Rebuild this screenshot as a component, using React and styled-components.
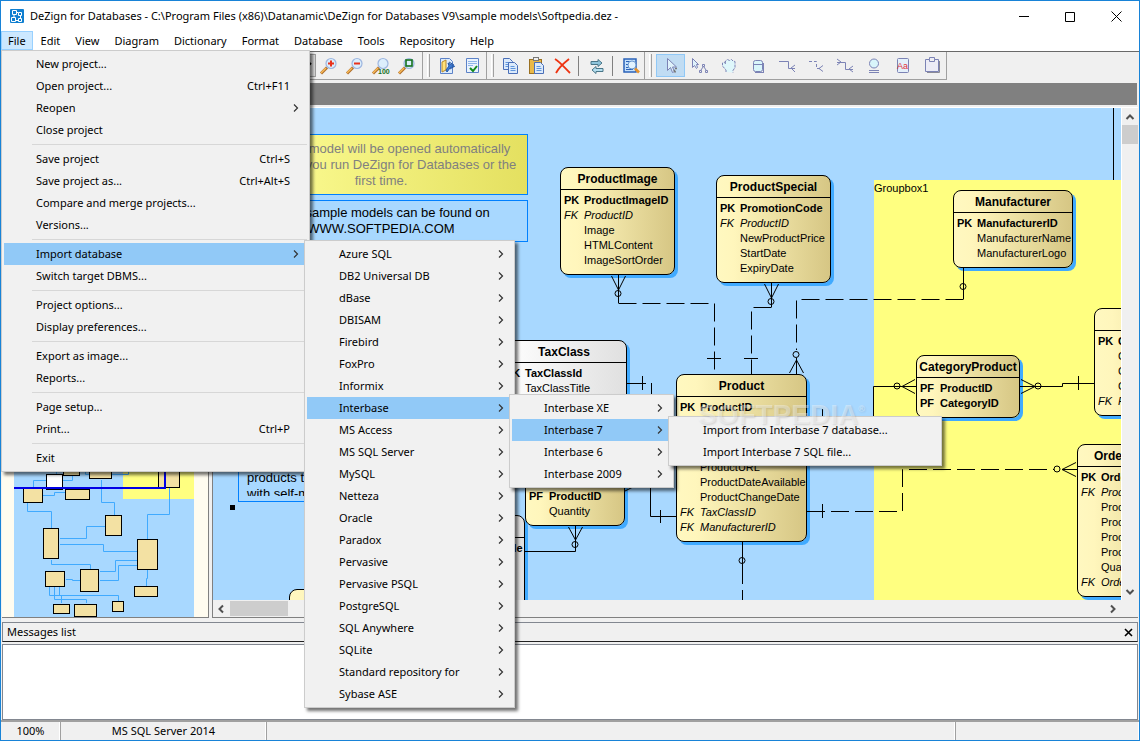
import styled, { createGlobalStyle, css } from "styled-components";

const MENU_BAR = [
  "File",
  "Edit",
  "View",
  "Diagram",
  "Dictionary",
  "Format",
  "Database",
  "Tools",
  "Repository",
  "Help",
];

const interbase7Menu = [
  { label: "Import from Interbase 7 database..." },
  { label: "Import Interbase 7 SQL file..." },
];

const interbaseMenu = [
  { label: "Interbase XE", more: true },
  { label: "Interbase 7", more: true, items: interbase7Menu, width: 274 },
  { label: "Interbase 6", more: true },
  { label: "Interbase 2009", more: true },
];

const importMenu = [
  "Azure SQL",
  "DB2 Universal DB",
  "dBase",
  "DBISAM",
  "Firebird",
  "FoxPro",
  "Informix",
  "Interbase",
  "MS Access",
  "MS SQL Server",
  "MySQL",
  "Netteza",
  "Oracle",
  "Paradox",
  "Pervasive",
  "Pervasive PSQL",
  "PostgreSQL",
  "SQL Anywhere",
  "SQLite",
  "Standard repository for",
  "Sybase ASE",
].map((label) => ({
  label,
  more: true,
  ...(label === "Interbase" ? { items: interbaseMenu, width: 165 } : {}),
}));

const fileMenu = [
  { label: "New project..." },
  { label: "Open project...", keys: "Ctrl+F11" },
  { label: "Reopen", more: true },
  { label: "Close project" },
  null,
  { label: "Save project", keys: "Ctrl+S" },
  { label: "Save project as...", keys: "Ctrl+Alt+S" },
  { label: "Compare and merge projects..." },
  { label: "Versions..." },
  null,
  { label: "Import database", more: true, items: importMenu, width: 211 },
  { label: "Switch target DBMS..." },
  null,
  { label: "Project options..." },
  { label: "Display preferences..." },
  null,
  { label: "Export as image..." },
  { label: "Reports..." },
  null,
  { label: "Page setup..." },
  { label: "Print...", keys: "Ctrl+P" },
  null,
  { label: "Exit" },
];

// part of the diagram that is scrolled into view
const VIEW = { x: 213, y: 108 };

const ENTITIES = [
  {
    name: "ProductImage", x: 560, y: 167, w: 115,
    rows: [["PK", "ProductImageID"], ["FK", "ProductID"], ["", "Image"], ["", "HTMLContent"], ["", "ImageSortOrder"]],
  },
  {
    name: "ProductSpecial", x: 716, y: 175, w: 115,
    rows: [["PK", "PromotionCode"], ["FK", "ProductID"], ["", "NewProductPrice"], ["", "StartDate"], ["", "ExpiryDate"]],
  },
  {
    name: "Manufacturer", x: 953, y: 190, w: 120,
    rows: [["PK", "ManufacturerID"], ["", "ManufacturerName"], ["", "ManufacturerLogo"]],
  },
  {
    name: "TaxClass", x: 501, y: 340, w: 126, plain: true,
    rows: [["PK", "TaxClassId"], ["", "TaxClassTitle"], ["", "Description"]],
  },
  {
    name: "Shipping", x: 424, y: 515, w: 101, plain: true,
    rows: [["PK", "ShippingCode"], ["", "Title"], ["", "Price"], ["", "Region"]],
  },
  {
    name: "CartItem", x: 525, y: 448, w: 100,
    rows: [["PF", "CartID"], ["PF", "ProductID"], ["", "Quantity"]],
  },
  {
    name: "Product", x: 676, y: 374, w: 131,
    rows: [
      ["PK", "ProductID"], ["", "ProductName"], ["", "Description"], ["", "Price"], ["", "ProductURL"],
      ["", "ProductDateAvailable"], ["", "ProductChangeDate"], ["FK", "TaxClassID"], ["FK", "ManufacturerID"],
    ],
  },
  {
    name: "CategoryProduct", x: 916, y: 355, w: 104,
    rows: [["PF", "ProductID"], ["PF", "CategoryID"]],
  },
  {
    name: "Category", x: 1094, y: 308, w: 120,
    rows: [["PK", "CategoryID"], ["", "CategoryName"], ["", "CategoryText"], ["", "CategoryLogo"], ["FK", "ParentID"]],
  },
  {
    name: "OrderProduct", x: 1077, y: 444, w: 112,
    rows: [
      ["PK", "OrderProductID"], ["FK", "ProductID"], ["", "ProductName"], ["", "ProductModel"],
      ["", "ProductPrice"], ["", "ProductTax"], ["", "Quantity"], ["FK", "OrderID"],
    ],
  },
  { name: "Customer", x: 289, y: 589, w: 110, rows: [["PK", "CustomerID"]] },
];

const IconText = styled.text`
  fill: ${({ $green }) => ($green ? "#14711c" : "#e0303c")};
  font-family: "Liberation Sans", Arial, sans-serif;
  font-size: ${({ $green }) => ($green ? 7 : 9)}px;
  font-weight: ${({ $green }) => ($green ? 700 : 400)};
`;

const Icon = ({ children }) => (
  <svg width="20" height="20" viewBox="0 0 20 20" fill="none" aria-hidden="true">
    {children}
  </svg>
);

const Magnifier = ({ children }) => (
  <Icon>
    <path d="M2 17.500l6-6" stroke="#b0702c" strokeWidth="3" />
    <path d="M2 17l5-5" stroke="#f9bb58" strokeWidth="1.500" />
    <circle cx="12" cy="7.500" r="5" fill="#dceefc" stroke="#9db6e0" strokeWidth="1.200" />
    {children}
  </Icon>
);

const PageShape = ({ x, y }) => (
  <g>
    <path d={`M${x} ${y}h6l3 3v8h-9z`} fill="#dbeafb" stroke="#4a6fb8" />
    <path d={`M${x + 2} ${y + 4}h4M${x + 2} ${y + 6}h5M${x + 2} ${y + 8}h5`} stroke="#5f95dc" />
  </g>
);

const ICONS = {
  zoomIn: (
    <Magnifier>
      <path d="M12 4.500v6M9 7.500h6" stroke="#e8321c" strokeWidth="2" />
    </Magnifier>
  ),
  zoomOut: (
    <Magnifier>
      <path d="M9 7.500h6" stroke="#e8321c" strokeWidth="2" />
    </Magnifier>
  ),
  zoom100: (
    <Magnifier>
      <IconText x="7" y="18" $green>100</IconText>
    </Magnifier>
  ),
  zoomFit: (
    <Magnifier>
      <rect x="9" y="4" width="6" height="6" stroke="#14711c" strokeWidth="1.600" />
    </Magnifier>
  ),
  generate: (
    <Icon>
      <path d="M3.500 2.500h9l3 3v12h-12z" fill="#dcebfb" stroke="#5c82c8" />
      <path d="M5 6l4-2v10l-4 2z" fill="#ffe27a" stroke="#b8892d" />
      <path d="M9 14l3-4-1-3 6 3-4 2-3 4zM12 6l5 3M13 13l5-3" fill="#3c7bd6" stroke="#2458a8" />
    </Icon>
  ),
  check: (
    <Icon>
      <path d="M3.500 2.500h12v14h-12z" fill="#eaf3fd" stroke="#5c82c8" />
      <path d="M5 5.500h9M5 7.500h9M5 9.500h5" stroke="#8fb6ea" />
      <path d="M7 12l3 3 4-5" stroke="#118a1c" strokeWidth="2" />
    </Icon>
  ),
  copy: (
    <Icon>
      <PageShape x={2.5} y={2.5} />
      <PageShape x={7.5} y={6.5} />
    </Icon>
  ),
  paste: (
    <Icon>
      <rect x="2.500" y="3.500" width="12" height="14" fill="#e9b949" stroke="#9a7022" />
      <rect x="6.500" y="1.500" width="5" height="3" fill="#eee" stroke="#777" />
      <PageShape x={7.5} y={6.5} />
    </Icon>
  ),
  remove: (
    <Icon>
      <path d="M2 3c5 3 10 9 15 14M16 3C11 7 6 11 3 17" stroke="#ee3311" strokeWidth="1.800" />
    </Icon>
  ),
  swap: (
    <Icon>
      <path d="M4 5.500h7v-2l4 3.500-4 3.500v-2H4z" fill="#8fc5dc" stroke="#4a7688" />
      <path d="M16 12.500H9v-2l-4 3.500 4 3.500v-2h7z" fill="#b5dff0" stroke="#4a7688" />
    </Icon>
  ),
  preview: (
    <Icon>
      <rect x="3" y="3" width="12" height="13" fill="#c4e0fb" stroke="#2a62b8" strokeWidth="1.500" />
      <path d="M5 5.500h4M5 8.500h2M5 11.500h3M5 13.500h7" stroke="#2a62b8" />
      <circle cx="11" cy="9" r="4" fill="#e2f3ff" stroke="#6d9ad0" />
      <path d="M14 12.500l4 4" stroke="#e5912c" strokeWidth="2.600" />
    </Icon>
  ),
  pointer: (
    <Icon>
      <path d="M6.500 2.500v12l3-3 2 5 2-1-2-4.500h4z" fill="#dff2fb" stroke="#7c83b5" />
      <path d="M14 12.500h2M13 14l1.500 2.500" stroke="#777" strokeWidth="1.500" />
    </Icon>
  ),
  pointerTree: (
    <Icon>
      <path d="M2.500 2.500v9l2-2 2 3 1-1-1-3h2z" fill="#dff2fb" stroke="#7c83b5" />
      <path d="M12.500 8.500h2v2h-2zM9.500 14.500h2v2h-2zM15.500 14.500h2v2h-2zM13 11l-2 3M14 11l2 3" stroke="#7c83b5" />
    </Icon>
  ),
  hand: (
    <Icon>
      <path
        d="M7 16v-2L3.500 10V7l2-1 1 2V5l2-1.500 2 1 2-1 1.500 1.500 2 .500v6l-2 3v2"
        fill="#dff7fb"
        stroke="#7c83b5"
        strokeDasharray="3 1"
      />
    </Icon>
  ),
  entity: (
    <Icon>
      <rect x="5.500" y="4.500" width="9" height="11" rx="2" fill="#d9f5fa" stroke="#7c83b5" />
      <path d="M6 8.500h8M15.500 7v9M7 16.500h9" stroke="#7c83b5" />
    </Icon>
  ),
  relation: (
    <Icon>
      <path d="M2 5.500h9.500v7H18M14 12l4-3M14 12l4 4" stroke="#7c83b5" />
    </Icon>
  ),
  relationDashed: (
    <Icon>
      <path d="M3 5.500h7.500v7h4" stroke="#7c83b5" strokeDasharray="3 2" />
      <path d="M13 12.500l4-3M13 12.500l4 3" stroke="#7c83b5" />
    </Icon>
  ),
  relationMany: (
    <Icon>
      <path d="M2 6.500h8.500v7H18M6 6L2 3M6 6L2 9M14 13l4-3M14 13l4 3" stroke="#7c83b5" />
    </Icon>
  ),
  subtype: (
    <Icon>
      <circle cx="10" cy="7.500" r="4.500" fill="#d9f5fa" stroke="#7c83b5" />
      <path d="M5 14.500h10M5 16.500h10" stroke="#7c83b5" />
    </Icon>
  ),
  label: (
    <Icon>
      <rect x="4.500" y="2.500" width="11" height="14" rx="1" fill="#e4f0fb" stroke="#7c83b5" />
      <IconText x="4" y="13">Aa</IconText>
    </Icon>
  ),
  note: (
    <Icon>
      <path d="M3.500 3.500h4v-2h5v2h4v12h-13zM7.500 3.500v2h5v-2" fill="#ececf6" stroke="#7c83b5" />
      <path d="M5 16.500h12.500V5" stroke="#8a8a96" />
    </Icon>
  ),
};

const Tool = ({ icon, label, wide, active }) => (
  <ToolButton type="button" aria-label={label} $wide={wide} $active={active}>
    {ICONS[icon]}
  </ToolButton>
);

const MenuList = ({ items, width, open }) => (
  <Menu $width={width} $nested={!open}>
    {items.map((item, i) =>
      item === null ? (
        <Separator key={i} role="separator" />
      ) : (
        <MenuEntry key={item.label}>
          <MenuButton type="button" $active={Boolean(item.items)}>
            <span>{item.label}</span>
            {item.keys && <Keys>{item.keys}</Keys>}
            {item.more && (
              <Arrow viewBox="0 0 6 10" width="6" height="10">
                <path d="M1 1.500L4.500 5 1 8.500" />
              </Arrow>
            )}
          </MenuButton>
          {item.items && <MenuList items={item.items} width={item.width} />}
        </MenuEntry>
      )
    )}
  </Menu>
);

const Entity = ({ name, x, y, w, plain, rows }) => (
  <EntityBox $w={w} $plain={plain} style={{ left: x - VIEW.x, top: y - VIEW.y }}>
    <EntityTitle>{name}</EntityTitle>
    <EntityRows>
      {rows.map(([key, field]) => (
        <EntityRow key={field} $kind={key}>
          <span>{key}</span>
          <span>{field}</span>
        </EntityRow>
      ))}
    </EntityRows>
  </EntityBox>
);

const Relations = () => (
  <RelationLayer viewBox={`${VIEW.x} ${VIEW.y} 908 492`} width="908" height="492">
    <g strokeDasharray="18 6">
      <path d="M618.500 303.500H714.500V370" />
      <path d="M771.500 307.500H751.500V374" />
      <path d="M963.500 299.500H796.500V350" />
      <path d="M807 511.500H902.500V469.500H1054" />
      <path d="M742.500 566V600" />
      <path d="M651.500 383V394" />
    </g>
    <path d="M618.500 275V303M611.500 276l7 14 7-14" />
    <path d="M771.500 283V307M764.500 284l7 14 7-14" />
    <path d="M963.500 268V299" />
    <path d="M796.500 358V374M789.500 373l7-13 7 13" />
    <path d="M707 358.500h14M744 358.500h14" />
    <path d="M627 383.500H646M642.500 376v14" />
    <path d="M650.500 480V516.500H676M660.500 510v13M625 491l12-6" />
    <path d="M807 416.500H873.500V386.500H916M822.500 409v14M915 379.500l-13 7 13 7" />
    <path d="M1020 386.500H1062.500V383.500H1094M1021 379.500l14 7-14 7M1078.500 376v14" />
    <path d="M822.500 504v14M1076 462.500l-14 7 14 7M1062 469.500h15" />
    <path d="M742.500 542V566" />
    <path d="M575.500 526V551.500H525M568.500 527l7 13 7-13" />
    <path d="M1113.500 108V180" />
    <g>
      <circle cx="618" cy="293.500" r="3" />
      <circle cx="771" cy="301.500" r="3" />
      <circle cx="963" cy="286.500" r="3" />
      <circle cx="796" cy="354.500" r="3" />
      <circle cx="897" cy="386" r="3" />
      <circle cx="1038" cy="386" r="3" />
      <circle cx="1057" cy="469" r="3" />
      <circle cx="742" cy="560.500" r="3" />
      <circle cx="575" cy="544.500" r="3" />
    </g>
  </RelationLayer>
);

const Overview = () => (
  <svg viewBox="2 108 207 510" width="207" height="510" aria-hidden="true">
    <rect x="14" y="108" width="180" height="510" fill="#a8d8ff" />
    <rect x="123" y="420" width="71" height="80" fill="#ffff80" />
    <path
      d="M33.500 489V481.500H46M62 481.500H72.500V476M43 496.500H54.500V493.500H65M27.500 504V512.500H51.500V529M101.500 481V503.500H114.500V516M60 539.500H86.500V527.500H105M60 545.500H103.500V552.500H137M51.500 561V565.500H90.500V570M100 572.500H115.500V561.500H137M100 581.500H118.500V566.500H137M169.500 489V515.500H147.500V540M147.500 571V579.500H146.500V587M66 580.500H72.500V581.500H80M49.500 588V596.500H118.500V602M54.500 588V600.500H86.500V604M59.500 588V596.500H61.500V604M56.500 468V475M85.500 468V475.500H90M112 475.500H128.500V468M14 472.500H52"
      fill="none"
      stroke="#40aaff"
    />
    <g fill="#f3e1a3" stroke="#000">
      <rect x="63.500" y="462.500" width="16" height="14" />
      <rect x="89.500" y="462.500" width="22" height="17" />
      <rect x="158.500" y="452.500" width="21" height="36" />
      <rect x="46.500" y="475.500" width="16" height="15" fill="#fff" />
      <rect x="23.500" y="489.500" width="19" height="14" />
      <rect x="65.500" y="490.500" width="24" height="10" />
      <rect x="105.500" y="516.500" width="16" height="20" />
      <rect x="43.500" y="529.500" width="15" height="30" />
      <rect x="137.500" y="540.500" width="20" height="30" />
      <rect x="45.500" y="572.500" width="19" height="15" />
      <rect x="80.500" y="570.500" width="18" height="22" />
      <rect x="134.500" y="587.500" width="23" height="10" />
      <rect x="53.500" y="605.500" width="16" height="9" />
      <rect x="74.500" y="605.500" width="22" height="12" />
      <rect x="112.500" y="602.500" width="11" height="10" />
    </g>
    <path d="M14 489H165V420" fill="none" stroke="#0000e6" strokeWidth="2" />
  </svg>
);

const Chevron = ({ turn }) => (
  <svg width="16" height="16" viewBox="0 0 16 16" fill="none" aria-hidden="true">
    <path d="M4.500 10L8 6.500 11.500 10" stroke="#505050" strokeWidth="2" transform={`rotate(${turn} 8 8)`} />
  </svg>
);

const App = () => (
  <>
    <GlobalStyle />
    <Window>
      <TitleBar>
        <svg width="14" height="14" viewBox="0 0 14 14" fill="none" aria-hidden="true">
          <rect width="14" height="14" rx="1" fill="#0f7fd0" />
          <path d="M2.500 1.500h4v4h-4zM8.500 3.500h3v3h-3zM1.500 8.500h4v4h-4zM8.500 9.500h3v3h-3zM6 3.500h2M4 6v2M10.500 7v2M6 11.500h2" stroke="#fff" />
        </svg>
        <Title>
          DeZign for Databases - C:\Program Files (x86)\Datanamic\DeZign for Databases V9\sample
          models\Softpedia.dez -
        </Title>
        <CaptionButton type="button" aria-label="Minimize">
          <svg width="11" height="11" viewBox="0 0 11 11">
            <path d="M0 5.500h10" />
          </svg>
        </CaptionButton>
        <CaptionButton type="button" aria-label="Maximize">
          <svg width="11" height="11" viewBox="0 0 11 11">
            <path d="M.500 1.500h9v9h-9z" />
          </svg>
        </CaptionButton>
        <CaptionButton type="button" aria-label="Close">
          <svg width="11" height="11" viewBox="0 0 11 11">
            <path d="M.500.500l10 10M10.500.500l-10 10" />
          </svg>
        </CaptionButton>
      </TitleBar>

      <MenuBar>
        {MENU_BAR.map((label) => (
          <MenuBarButton key={label} type="button" $active={label === "File"}>
            {label}
          </MenuBarButton>
        ))}
        <MenuList items={fileMenu} width={309} open />
      </MenuBar>

      <Toolbar>
        <Band $first>
          <ZoomSelect aria-label="Zoom" defaultValue="100%">
            <option>100%</option>
          </ZoomSelect>
          <Tool icon="zoomIn" label="Zoom in" />
          <Tool icon="zoomOut" label="Zoom out" />
          <Tool icon="zoom100" label="Zoom 100%" />
          <Tool icon="zoomFit" label="Zoom to fit" />
        </Band>
        <Band>
          <Grip />
          <Tool icon="generate" label="Generate database" />
          <Tool icon="check" label="Check model" />
        </Band>
        <Band>
          <Grip />
          <Tool icon="copy" label="Copy" />
          <Tool icon="paste" label="Paste" />
          <Tool icon="remove" label="Delete" />
          <Divider />
          <Tool icon="swap" label="Switch" />
          <Divider />
          <Tool icon="preview" label="Preview" />
        </Band>
        <Band>
          <Grip />
          <Tool icon="pointer" label="Select" wide active />
          <Tool icon="pointerTree" label="Select tree" wide />
          <Tool icon="hand" label="Pan" wide />
          <Tool icon="entity" label="Entity" wide />
          <Tool icon="relation" label="Identifying relationship" wide />
          <Tool icon="relationDashed" label="Relationship" wide />
          <Tool icon="relationMany" label="Many to many" wide />
          <Tool icon="subtype" label="Subtype" wide />
          <Tool icon="label" label="Label" wide />
          <Tool icon="note" label="Note" wide />
        </Band>
      </Toolbar>

      <TabStrip />

      <Workspace>
        <Sidebar>
          <Overview />
        </Sidebar>
        <DiagramPane>
          <Canvas>
            <GroupBox style={{ left: 874 - VIEW.x, top: 180 - VIEW.y }}>Groupbox1</GroupBox>
            <Note $w={294} $h={61} $yellow style={{ left: 234 - VIEW.x, top: 134 - VIEW.y }}>
              A sample model will be opened automatically
              <br />
              each time you run DeZign for Databases or the
              <br />
              first time.
            </Note>
            <Note $w={294} $h={42} style={{ left: 234 - VIEW.x, top: 200 - VIEW.y }}>
              More sample models can be found on
              <br />
              WWW.SOFTPEDIA.COM
            </Note>
            <Note $w={200} $h={62} $left style={{ left: 238 - VIEW.x, top: 440 - VIEW.y }}>
              <NoteText>
                A web shop for
                <br />
                products to order
                <br />
                with self-made
              </NoteText>
            </Note>
            <Handle style={{ left: 230 - VIEW.x, top: 505 - VIEW.y }} />
            {ENTITIES.map((entity) => (
              <Entity key={entity.name} {...entity} />
            ))}
            <Relations />
            <Watermark style={{ left: 698 - VIEW.x, top: 399 - VIEW.y }}>
              SOFTPEDIA<sup>®</sup>
            </Watermark>
          </Canvas>
          <ScrollColumn>
            <ScrollButton type="button" aria-label="Scroll up">
              <Chevron turn={0} />
            </ScrollButton>
            <Thumb $h={19} />
            <ScrollButton type="button" aria-label="Scroll down" $last>
              <Chevron turn={180} />
            </ScrollButton>
          </ScrollColumn>
          <ScrollRow>
            <ScrollButton type="button" aria-label="Scroll left">
              <Chevron turn={-90} />
            </ScrollButton>
            <Thumb $w={58} />
            <ScrollButton type="button" aria-label="Scroll right" $last>
              <Chevron turn={90} />
            </ScrollButton>
          </ScrollRow>
        </DiagramPane>
      </Workspace>

      <MessagesHeader>
        <span>Messages list</span>
        <CloseMessages type="button" aria-label="Close messages">
          <svg width="9" height="9" viewBox="0 0 9 9">
            <path d="M1 1l7 7M8 1L1 8" stroke="#000" strokeWidth="1.600" />
          </svg>
        </CloseMessages>
      </MessagesHeader>
      <MessagesBox />

      <StatusBar>
        <StatusCell $w={60}>100%</StatusCell>
        <StatusCell $w={206}>MS SQL Server 2014</StatusCell>
        <StatusCell $grow />
        <StatusCell $w={183} $last />
      </StatusBar>
    </Window>
  </>
);

export default App;

const GlobalStyle = createGlobalStyle`
  * {
    box-sizing: border-box;
  }

  body {
    margin: 0;
    background: #f0f0f0;
    color: #000;
    font-family: "Noto Sans", "Open Sans", sans-serif;
    font-size: 11px;
    line-height: 16px;
  }

  button,
  select {
    margin: 0;
    padding: 0;
    border: 0;
    background: none;
    color: inherit;
    font: inherit;
  }

  svg {
    display: block;
    flex: none;
  }
`;

const Window = styled.div`
  display: flex;
  flex-direction: column;
  height: 100vh;
  border: 1px solid #1883d7;
  background: #f0f0f0;
  overflow: hidden;
`;

const TitleBar = styled.header`
  display: flex;
  align-items: center;
  height: 30px;
  flex: none;
  padding-left: 9px;
  background: #fff;
`;

const Title = styled.h1`
  flex: 1;
  margin: 0 0 0 6px;
  font-size: 11px;
  font-weight: 400;
  white-space: nowrap;
`;

const CaptionButton = styled.button`
  display: grid;
  place-items: center;
  width: 46px;
  height: 28px;

  path {
    fill: none;
    stroke: #000;
  }
`;

const MenuBar = styled.nav`
  position: relative;
  display: flex;
  gap: 1px;
  flex: none;
  height: 20px;
  background: #fff;
`;

const MenuBarButton = styled.button`
  height: 19px;
  padding: 0 6px;
  border: 1px solid transparent;
  line-height: 17px;

  ${({ $active }) =>
    $active &&
    css`
      background: #cce8ff;
      border-color: #99d1ff;
    `}
`;

const Menu = styled.ul`
  position: absolute;
  z-index: 10;
  left: ${({ $nested }) => ($nested ? "calc(100% - 3px)" : "0")};
  top: ${({ $nested }) => ($nested ? "-3px" : "19px")};
  width: ${({ $width }) => $width}px;
  margin: 0;
  padding: 2px;
  list-style: none;
  background: #f1f1f1;
  border: 1px solid #ccc;
  box-shadow: 3px 3px 3px rgba(0, 0, 0, 0.55);
`;

const MenuEntry = styled.li`
  position: relative;
`;

const MenuButton = styled.button`
  display: flex;
  align-items: center;
  justify-content: space-between;
  width: 100%;
  height: 22px;
  padding: 0 8px 0 32px;
  white-space: nowrap;
  background: ${({ $active }) => ($active ? "#91c9f7" : "transparent")};
`;

const Keys = styled.span`
  margin-right: 9px;
`;

const Arrow = styled.svg`
  path {
    fill: none;
    stroke: #333;
    stroke-width: 1.2;
  }
`;

const Separator = styled.li`
  height: 1px;
  margin: 3px 0 3px 28px;
  background: #d7d7d7;
`;

const Toolbar = styled.div`
  display: flex;
  flex: none;
  height: 29px;
  border-top: 1px solid #696969;
`;

const Band = styled.div`
  display: flex;
  align-items: center;
  justify-content: flex-end;
  padding-left: 4px;
  border-right: 1px solid #a0a0a0;
  border-bottom: 1px solid #a0a0a0;
  ${({ $first }) =>
    $first &&
    css`
      width: 422px;
      padding-right: 2px;
    `}
`;

const Grip = styled.span`
  width: 3px;
  height: 23px;
  margin-right: 4px;
  border-left: 1px solid #fff;
  border-right: 1px solid #a0a0a0;
`;

const Divider = styled.span`
  width: 1px;
  height: 20px;
  margin: 0 5px 0 2px;
  background: #808080;
`;

const ToolButton = styled.button`
  display: grid;
  place-items: center;
  width: ${({ $wide }) => ($wide ? 29 : 26)}px;
  height: 23px;
  ${({ $active }) =>
    $active &&
    css`
      background: #c0dcf3;
      border: 1px solid #90c8f6;
    `}
`;

const ZoomSelect = styled.select`
  width: 64px;
  height: 23px;
  border: 1px solid #a0a0a0;
  background: #e1e1e1;
`;

const TabStrip = styled.div`
  flex: none;
  height: 22px;
  margin: 3px 2px 2px 1px;
  background: #808080;
`;

const Workspace = styled.main`
  display: flex;
  flex: 1;
  min-height: 0;
  margin: 0 1px;
`;

const Sidebar = styled.aside`
  display: flex;
  align-items: flex-end;
  flex: none;
  width: 207px;
  overflow: hidden;
  background: #fffcf0;
  border-right: 1px solid #808080;
  border-bottom: 1px solid #808080;
`;

const DiagramPane = styled.section`
  display: grid;
  flex: 1;
  min-width: 0;
  margin-left: 3px;
  grid-template-columns: minmax(0, 1fr) 17px;
  grid-template-rows: minmax(0, 1fr) 17px;
  border-left: 1px solid #808080;
  border-top: 1px solid #fff;
  border-bottom: 1px solid #808080;
`;

const Canvas = styled.div`
  position: relative;
  overflow: hidden;
  background: #a8d8ff;
  font-family: "Liberation Sans", Arial, sans-serif;
`;

const ScrollColumn = styled.div`
  display: flex;
  flex-direction: column;
  background: #f0f0f0;
  border-left: 1px solid #fff;
`;

const ScrollRow = styled.div`
  display: flex;
  background: #f0f0f0;
`;

const ScrollButton = styled.button`
  display: grid;
  place-items: center;
  width: 16px;
  height: 17px;
  margin: ${({ $last }) => ($last ? "auto 0 0 auto" : "0")};
`;

const Thumb = styled.div`
  width: ${({ $w }) => ($w ? `${$w}px` : "auto")};
  height: ${({ $h }) => ($h ? `${$h}px` : "auto")};
  margin: ${({ $w }) => ($w ? "1px 0 1px 1px" : "0")};
  background: #cdcdcd;
`;

const RelationLayer = styled.svg`
  position: absolute;
  left: 0;
  top: 0;
  fill: none;
  stroke: #000;
`;

const GroupBox = styled.div`
  position: absolute;
  right: 0;
  bottom: 0;
  background: #ffff80;
  font-size: 11px;
`;

const Note = styled.div`
  position: absolute;
  display: grid;
  align-content: ${({ $left }) => ($left ? "end" : "center")};
  width: ${({ $w }) => $w}px;
  height: ${({ $h }) => $h}px;
  padding-bottom: ${({ $left }) => ($left ? 5 : 0)}px;
  border: 1px solid #0080ff;
  color: ${({ $yellow }) => ($yellow ? "#808080" : "#000")};
  background: ${({ $yellow }) => ($yellow ? "linear-gradient(90deg, #ffff99, #e4e060)" : "transparent")};
  font-size: 13px;
  text-align: ${({ $left }) => ($left ? "left" : "center")};
  white-space: nowrap;
`;

const NoteText = styled.div`
  height: 42px;
  padding-left: 8px;
  overflow: hidden;
`;

const Handle = styled.div`
  position: absolute;
  width: 5px;
  height: 5px;
  background: #000;
`;

const EntityBox = styled.article`
  position: absolute;
  width: ${({ $w }) => $w}px;
  border: 1px solid #000;
  border-radius: 8px;
  background: ${({ $plain }) =>
    $plain
      ? "linear-gradient(90deg, #ffffff, #e0e0e0)"
      : "linear-gradient(90deg, #fff8c0, #fff6bc 15%, #d6c684)"};
  box-shadow: 3px 3px 0 #40aaff;
`;

const EntityTitle = styled.h2`
  height: 22px;
  margin: 0;
  border-bottom: 1px solid #000;
  font-size: 12px;
  line-height: 22px;
  text-align: center;
`;

const EntityRows = styled.ul`
  margin: 0;
  padding: 3px 0 6px 3px;
  list-style: none;
`;

const EntityRow = styled.li`
  display: grid;
  grid-template-columns: 20px auto;
  font-size: 11px;
  line-height: 15px;
  white-space: nowrap;
  font-weight: ${({ $kind }) => ($kind === "PK" || $kind === "PF" ? 700 : 400)};
  font-style: ${({ $kind }) => ($kind === "FK" ? "italic" : "normal")};
`;

const Watermark = styled.div`
  position: absolute;
  z-index: 20;
  color: rgba(255, 255, 255, 0.4);
  font-size: 28px;
  font-weight: 700;
  line-height: 32px;
  text-shadow: 1px 1px 2px rgba(0, 0, 0, 0.12);
  pointer-events: none;

  sup {
    font-size: 9px;
    line-height: 0;
    vertical-align: 12px;
  }
`;

const MessagesHeader = styled.div`
  display: flex;
  align-items: center;
  justify-content: space-between;
  flex: none;
  height: 20px;
  margin: 4px 1px 2px;
  padding: 0 3px 0 4px;
  border: 1px solid #828790;
  border-bottom-color: #222;
`;

const CloseMessages = styled.button`
  display: grid;
  place-items: center;
  width: 11px;
  height: 16px;
`;

const MessagesBox = styled.div`
  flex: none;
  height: 76px;
  margin: 0 1px;
  background: #fff;
  border: 1px solid #828790;
`;

const StatusBar = styled.footer`
  display: flex;
  flex: none;
  height: 20px;
  border-top: 2px solid #a0a0a0;
`;

const StatusCell = styled.div`
  width: ${({ $w }) => ($w ? `${$w}px` : "auto")};
  flex: ${({ $grow }) => ($grow ? "1" : "none")};
  border-right: ${({ $last }) => ($last ? "0" : "1px solid #a0a0a0")};
  box-shadow: inset -1px 0 0 #fff;
  line-height: 18px;
  text-align: center;
`;
